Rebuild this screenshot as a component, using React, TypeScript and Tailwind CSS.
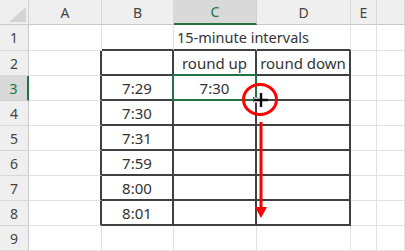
import { Fragment } from "react";

const COLS = ["A", "B", "C", "D", "E", ""];
const ROWS = [1, 2, 3, 4, 5, 6, 7, 8, 9];

const values: Record<string, string> = {
  C1: "15-minute intervals",
  C2: "round up",
  D2: "round down",
  B3: "7:29",
  C3: "7:30",
  B4: "7:30",
  B5: "7:31",
  B6: "7:59",
  B7: "8:00",
  B8: "8:01",
};

function inTable(r: number, c: string) {
  return r >= 2 && r <= 8 && (c === "B" || c === "C" || c === "D");
}

function Cell({ r, c }: { r: number; c: string }) {
  const darkRight = r >= 2 && r <= 8 && (c === "A" || c === "B" || c === "C" || c === "D");
  const darkBottom = inTable(r, c) || (r === 1 && (c === "B" || c === "C" || c === "D"));
  const overflow = r === 1 && c === "C";
  const v = values[c + r];

  return (
    <div
      className={[
        "relative flex items-center whitespace-nowrap text-[15px] text-[#333]",
        r === 1 ? "justify-start pl-[3px]" : "justify-center",
        overflow
          ? "border-r border-r-transparent"
          : darkRight
          ? "border-r-2 border-r-[#404040]"
          : "border-r border-r-[#e1e1e1]",
        darkBottom ? "border-b-2 border-b-[#404040]" : "border-b border-b-[#e1e1e1]",
      ].join(" ")}
    >
      {v && <span className={overflow ? "relative z-10 pt-[1px] text-[14.5px]" : "pt-[1px]"}>{v}</span>}
      {r === 3 && c === "C" && (
        <div className="pointer-events-none absolute -left-[2px] -top-[2px] -right-[2px] -bottom-[2px] border-2 border-[#217346]" />
      )}
    </div>
  );
}

export default function App() {
  return (
    <div className="relative h-[251px] w-[405px] overflow-hidden bg-white" style={{ fontFamily: '"Noto Sans", "Noto Sans CJK JP", sans-serif' }}>
      <div className="grid grid-cols-[29px_73px_72px_83px_94px_26px_1fr] grid-rows-[25px_26px_repeat(8,25px)]">
        {/* corner */}
        <div className="relative border-r border-b border-r-[#d0d0d0] border-b-[#c8c8c8] bg-[#efefef]">
          <svg className="absolute left-[9px] top-[7px]" width="17" height="15" viewBox="0 0 17 15">
            <polygon points="17,0 17,15 0,15" fill="#d4d4d4" />
          </svg>
        </div>
        {COLS.map((c) => (
          <div
            key={c || "F"}
            className={
              c === "C"
                ? "flex items-center justify-center border-r border-r-[#d0d0d0] border-b-2 border-b-[#217346] bg-[#d9d9d9] text-[14px] text-[#217346]"
                : "flex items-center justify-center border-r border-r-[#d8d8d8] border-b border-b-[#c8c8c8] bg-[#efefef] text-[14px] text-[#444]"
            }
          >
            {c}
          </div>
        ))}
        {ROWS.map((r) => (
          <Fragment key={r}>
            <div
              className={
                r === 3
                  ? "flex items-center justify-center border-r-2 border-r-[#217346] border-b border-b-[#d0d0d0] bg-[#d9d9d9] text-[14px] text-[#217346]"
                  : "flex items-center justify-center border-r border-r-[#c8c8c8] border-b border-b-[#d8d8d8] bg-[#efefef] text-[14px] text-[#444]"
              }
            >
              {r}
            </div>
            {COLS.map((c) => (
              <Cell key={c + r} r={r} c={c || "F"} />
            ))}
          </Fragment>
        ))}
      </div>

      {/* annotation: fill handle, cursor, circle and arrow */}
      <svg className="pointer-events-none absolute left-0 top-0" width="405" height="251" viewBox="0 0 405 251">
        <rect x="253" y="97" width="5" height="5" fill="#217346" />
        <line x1="254" y1="100" x2="268" y2="100" stroke="#fff" strokeWidth="5" />
        <line x1="261" y1="93" x2="261" y2="107" stroke="#fff" strokeWidth="5" />
        <line x1="254" y1="100" x2="268" y2="100" stroke="#111" strokeWidth="2.5" />
        <line x1="261" y1="93" x2="261" y2="107" stroke="#111" strokeWidth="2.5" />
        <ellipse cx="260" cy="99.5" rx="16.5" ry="15" fill="none" stroke="#ff0000" strokeWidth="3" />
        <line x1="261" y1="122" x2="261" y2="208" stroke="#ff0000" strokeWidth="3" />
        <polygon points="255,207 267,207 261,218" fill="#ff0000" />
      </svg>
    </div>
  );
}
